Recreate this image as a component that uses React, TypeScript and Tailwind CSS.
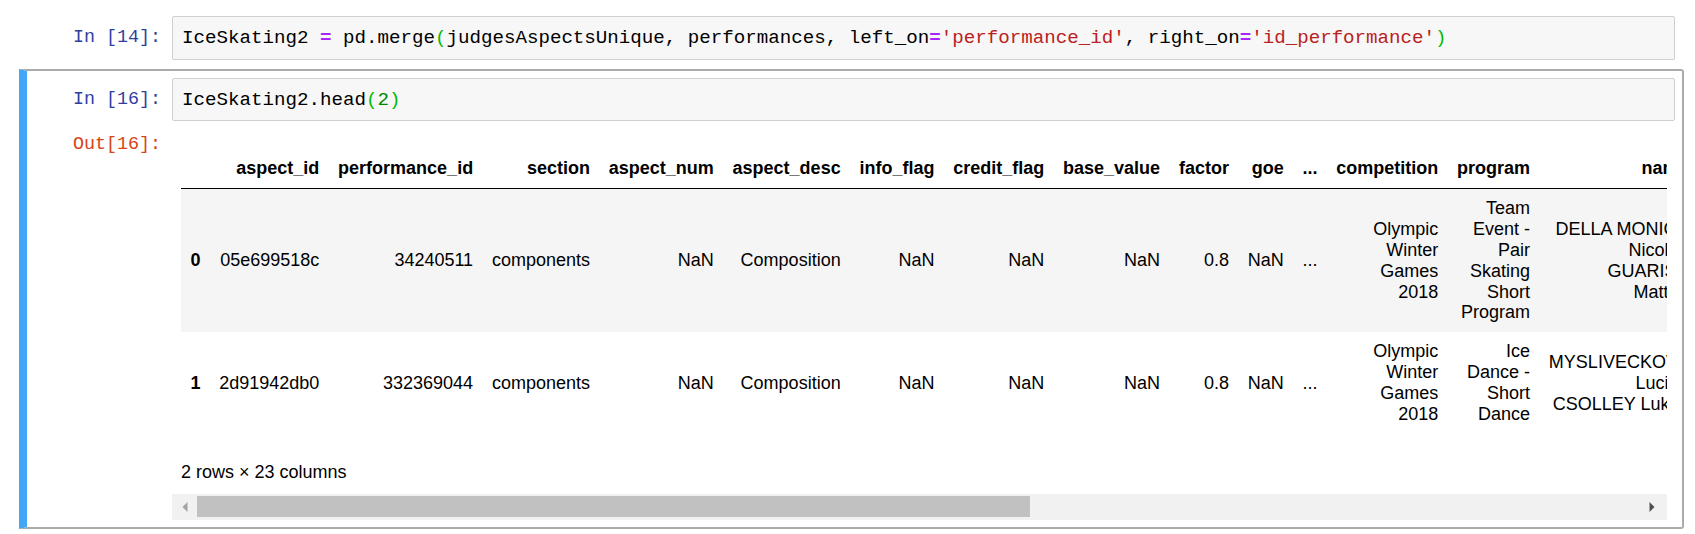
import React from "react";

const mono = "font-['Liberation_Mono','DejaVu_Sans_Mono',monospace]";

const headers = [
  "",
  "aspect_id",
  "performance_id",
  "section",
  "aspect_num",
  "aspect_desc",
  "info_flag",
  "credit_flag",
  "base_value",
  "factor",
  "goe",
  "...",
  "competition",
  "program",
  "name",
  "nation",
  "rank",
  "starting_number",
  "total_segment_score",
  "total_element_score",
  "total_component_score",
  "total_deductions",
];

type Cell = string | string[];

const rows: Cell[][] = [
  [
    "0",
    "05e699518c",
    "34240511",
    "components",
    "NaN",
    "Composition",
    "NaN",
    "NaN",
    "NaN",
    "0.8",
    "NaN",
    "...",
    "Olympic Winter Games 2018",
    "Team Event - Pair Skating Short Program",
    ["DELLA MONICA", "Nicole /", "GUARISE", "Matteo"],
    "ITA",
    "4",
    "6",
    "71.58",
    "36.95",
    "34.63",
    "0.0",
  ],
  [
    "1",
    "2d91942db0",
    "332369044",
    "components",
    "NaN",
    "Composition",
    "NaN",
    "NaN",
    "NaN",
    "0.8",
    "NaN",
    "...",
    "Olympic Winter Games 2018",
    "Ice Dance - Short Dance",
    ["MYSLIVECKOVA", "Lucie /", "CSOLLEY Lukas"],
    "CZE",
    "14",
    "9",
    "58.24",
    "30.11",
    "28.13",
    "0.0",
  ],
];

function Op({ children }: { children: React.ReactNode }) {
  return <span className="text-[#AA22FF] font-bold">{children}</span>;
}
function Str({ children }: { children: React.ReactNode }) {
  return <span className="text-[#BA2121]">{children}</span>;
}
function Br({ children }: { children: React.ReactNode }) {
  return <span className="text-[#00bb00]">{children}</span>;
}

function Prompt({ children, out }: { children: React.ReactNode; out?: boolean }) {
  return (
    <div
      className={`${mono} w-[138px] shrink-0 text-right pr-[11px] text-[18.33px] leading-[22px] whitespace-pre ${
        out ? "text-[#D84315]" : "text-[#303F9F]"
      }`}
    >
      {children}
    </div>
  );
}

function CodeBox({ children, h }: { children: React.ReactNode; h: string }) {
  return (
    <div
      className={`flex-1 ${h} border border-[#cfcfcf] bg-[#f7f7f7] rounded-[2px] flex items-center pl-[9px] ${mono} text-[19.16px] leading-[24px] text-black whitespace-pre overflow-hidden`}
    >
      {children}
    </div>
  );
}

function renderCell(c: Cell) {
  if (Array.isArray(c)) {
    return c.map((l, i) => (
      <React.Fragment key={i}>
        {i > 0 && <br />}
        {l}
      </React.Fragment>
    ));
  }
  return c;
}

export default function App() {
  return (
    <div className="w-[1695px] h-[534px] bg-white overflow-hidden pt-[7px]">
      {/* Cell 1 (unselected) */}
      <div className="ml-[19px] w-[1665px] border-2 border-l-[8px] border-transparent p-[7px] flex items-center">
        <Prompt>In [14]:</Prompt>
        <CodeBox h="h-[44px]">
          IceSkating2 <Op>=</Op> pd.merge<Br>(</Br>judgesAspectsUnique, performances, left_on<Op>=</Op>
          <Str>'performance_id'</Str>, right_on<Op>=</Op>
          <Str>'id_performance'</Str>
          <Br>)</Br>
        </CodeBox>
      </div>

      {/* Cell 2 (selected) */}
      <div className="ml-[19px] w-[1665px] border-2 border-[#ababab] border-l-[8px] border-l-[#42A5F5] rounded-r-[3px] p-[7px] pb-[7px]">
        <div className="flex items-center">
          <Prompt>In [16]:</Prompt>
          <CodeBox h="h-[43px]">
            IceSkating2.head<Br>(</Br>
            <span className="text-[#008800]">2</span>
            <Br>)</Br>
          </CodeBox>
        </div>

        <div className="flex">
          <div className="pt-[13px]">
            <Prompt out>Out[16]:</Prompt>
          </div>
          <div className="w-[1495px]">
            <div className="overflow-hidden pl-[9px] pt-[28px] font-['Liberation_Sans',Arial,sans-serif] text-[18px] leading-[20.9px] text-black">
              <table className="w-px border-collapse">
                <thead>
                  <tr>
                    {headers.map((h, i) => (
                      <th
                        key={i}
                        className="px-[9.4px] py-[9px] text-right font-bold align-middle border-b border-black whitespace-nowrap"
                      >
                        {h}
                      </th>
                    ))}
                  </tr>
                </thead>
                <tbody>
                  {rows.map((r, ri) => (
                    <tr key={ri} className={ri % 2 === 0 ? "bg-[#f5f5f5]" : "bg-white"}>
                      {r.map((c, ci) =>
                        ci === 0 ? (
                          <th key={ci} className="px-[9.4px] py-[9px] text-right font-bold align-middle">
                            {c}
                          </th>
                        ) : (
                          <td
                            key={ci}
                            className={`px-[9.4px] py-[9px] text-right font-normal align-middle ${
                              Array.isArray(c) ? "whitespace-nowrap" : "whitespace-normal"
                            }`}
                          >
                            {renderCell(c)}
                          </td>
                        )
                      )}
                    </tr>
                  ))}
                </tbody>
              </table>
              <p className="mt-[28px] whitespace-nowrap">2 rows × 23 columns</p>
            </div>

            {/* horizontal scrollbar */}
            <div className="mt-[11px] h-[26px] bg-[#f1f1f1] flex">
              <div className="w-[25px] shrink-0 flex items-center justify-center">
                <svg width="6" height="10" viewBox="0 0 6 10">
                  <polygon points="5.5,0 5.5,10 0.5,5" fill="#a3a3a3" />
                </svg>
              </div>
              <div className="w-[833px] shrink-0 my-[2.5px] bg-[#c1c1c1]" />
              <div className="flex-1" />
              <div className="w-[25px] shrink-0 flex items-center justify-start pl-[7px]">
                <svg width="6" height="10" viewBox="0 0 6 10">
                  <polygon points="0.5,0 0.5,10 5.5,5" fill="#505050" />
                </svg>
              </div>
            </div>
          </div>
        </div>
      </div>
    </div>
  );
}
